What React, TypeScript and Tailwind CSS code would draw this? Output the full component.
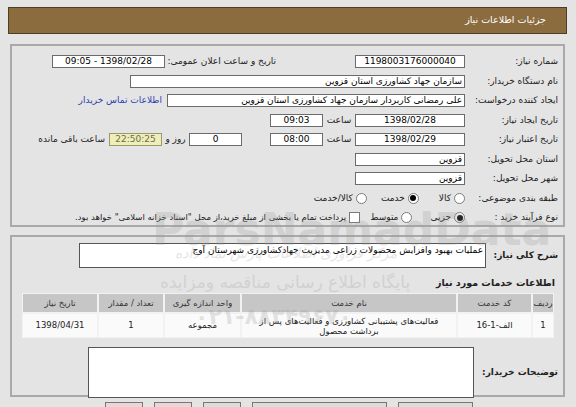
const Box = ({ w, children, align = "center", className = "" }: { w: string; children?: React.ReactNode; align?: "center" | "right"; className?: string }) => (
  <div
    className={`${w} h-[13px] shrink-0 bg-white border border-[#6b6b6b] flex items-center px-[2px] leading-none text-black whitespace-nowrap overflow-hidden ${align === "center" ? "justify-center" : "justify-start"} ${className}`}
  >
    {children}
  </div>
);

const Radio = ({ checked = false }: { checked?: boolean }) => (
  <span className="w-[11px] h-[11px] rounded-full border border-[#7a7a7a] bg-white flex items-center justify-center shrink-0">
    {checked && <span className="w-[6px] h-[6px] rounded-full bg-black" />}
  </span>
);

const Row = ({ label, children }: { label: string; children?: React.ReactNode }) => (
  <div className="h-[19.5px] flex items-center whitespace-nowrap">
    <div className="w-[93px] shrink-0 text-[#222]">{label}</div>
    {children}
  </div>
);

export default function App() {
  return (
    <div
      dir="rtl"
      className="relative w-[576px] h-[407px] overflow-hidden bg-[#e4e4e4] text-[9px] text-[#222]"
      style={{ fontFamily: '"DejaVu Sans", Tahoma, sans-serif' }}
    >
      <div className="pt-[7px] mr-[9px] ml-[8px]">
        <div className="h-[27px] bg-[#8b6c3f] border border-[#4f3e24] flex items-center pr-[20px] text-white text-[9.5px]">
          جزئیات اطلاعات نیاز
        </div>
      </div>

      {/* panel 1 */}
      <div className="mt-[10px] mr-[11px] ml-[10px] h-[183px] border-2 border-[#a9a9a9] pr-[5px] pt-[6px]">
        <Row label="شماره نیاز:">
          <Box w="w-[110px]">1198003176000040</Box>
          <div className="w-[108px] mr-[79px] shrink-0">تاریخ و ساعت اعلان عمومی:</div>
          <Box w="w-[113px]" className="mr-[3px]">1398/02/28 - 09:05</Box>
        </Row>
        <Row label="نام دستگاه خریدار:">
          <Box w="w-[335px]" align="right">سازمان جهاد کشاورزی استان قزوین</Box>
        </Row>
        <Row label="ایجاد کننده درخواست:">
          <Box w="w-[298px]" align="right">علی رمضانی کاربردار سازمان جهاد کشاورزی استان قزوین</Box>
          <span className="mr-[5px] text-[#2f3fb0]">اطلاعات تماس خریدار</span>
        </Row>
        <Row label="تاریخ ایجاد نیاز:">
          <Box w="w-[110px]">1398/02/28</Box>
          <span className="w-[32px] text-center">ساعت</span>
          <Box w="w-[53px]">09:03</Box>
        </Row>
        <Row label="تاریخ اعتبار نیاز:">
          <Box w="w-[110px]">1398/02/29</Box>
          <span className="w-[32px] text-center">ساعت</span>
          <Box w="w-[53px]">08:00</Box>
          <Box w="w-[53px]" className="mr-[28px]">0</Box>
          <span className="w-[27px] text-center">روز و</span>
          <div className="w-[53px] h-[13px] bg-[#eeeebb] border border-[#9a9a6a] flex items-center justify-center text-[#6d6d4a] leading-none">22:50:25</div>
          <span className="mr-[4px]">ساعت باقی مانده</span>
        </Row>
        <Row label="استان محل تحویل:">
          <Box w="w-[110px]" align="right">قزوین</Box>
        </Row>
        <Row label="شهر محل تحویل:">
          <Box w="w-[110px]" align="right">قزوین</Box>
        </Row>
        <Row label="طبقه بندی موضوعی:">
          <div className="flex items-center gap-[3px]">
            <Radio />
            <span>کالا</span>
          </div>
          <div className="flex items-center gap-[3px] mr-[20px]">
            <Radio checked />
            <span>خدمت</span>
          </div>
          <div className="flex items-center gap-[3px] mr-[14px]">
            <Radio />
            <span>کالا/خدمت</span>
          </div>
        </Row>
        <Row label="نوع فرآیند خرید :">
          <div className="flex items-center gap-[3px]">
            <Radio checked />
            <span>جزیی</span>
          </div>
          <div className="flex items-center gap-[3px] mr-[18px]">
            <Radio />
            <span>متوسط</span>
          </div>
          <div className="flex items-center gap-[3px] mr-[10px]">
            <span className="w-[11px] h-[11px] border border-[#7a7a7a] bg-white shrink-0" />
            <span className="text-[8.5px]">پرداخت تمام یا بخشی از مبلغ خرید،از محل "اسناد خزانه اسلامی" خواهد بود.</span>
          </div>
        </Row>
      </div>

      {/* panel 2 */}
      <div className="mt-[8px] mr-[11px] ml-[10px] h-[162px] border-2 border-[#a9a9a9] pt-[6px]">
        <div className="flex items-center pr-[5px]">
          <div className="w-[72px] shrink-0 text-[9px] font-bold text-[#222] whitespace-nowrap">شرح کلی نیاز:</div>
          <div className="w-[407px] h-[25px] bg-white border border-[#555] px-[2px] leading-[13px] text-black whitespace-nowrap overflow-hidden">
            عملیات بهبود وافزایش محصولات زراعی مدیریت جهادکشاورزی شهرستان آوج
          </div>
        </div>
        <div className="mt-[8px] pr-[8px] text-[9.5px] font-bold text-[#222] leading-[14px]">اطلاعات خدمات مورد نیاز</div>
        <div className="mt-[3px] mr-[9px] w-[532px] bg-[#f2f2f2] p-px">
          <div className="grid grid-cols-[20px_73px_214px_75px_64px_1fr] gap-[2px] text-[8.5px]">
            {["ردیف", "کد خدمت", "نام خدمت", "واحد اندازه گیری", "تعداد / مقدار", "تاریخ نیاز"].map((h) => (
              <div key={h} className="h-[18px] bg-[#c6c6c6] flex items-center justify-center text-[#333] whitespace-nowrap overflow-hidden">
                {h}
              </div>
            ))}
            <div className="h-[23px] bg-[#fafafa] flex items-center justify-center">1</div>
            <div className="h-[23px] bg-[#fafafa] flex items-center justify-center">الف-1-16</div>
            <div className="h-[23px] bg-[#fafafa] flex items-center justify-center text-center leading-[10px] px-[2px]">
              فعالیت‌های پشتیبانی کشاورزی و فعالیت‌های پس از برداشت محصول
            </div>
            <div className="h-[23px] bg-[#fafafa] flex items-center justify-center">مجموعه</div>
            <div className="h-[23px] bg-[#fafafa] flex items-center justify-center">1</div>
            <div className="h-[23px] bg-[#fafafa] flex items-center justify-center">1398/04/31</div>
          </div>
        </div>
        <div className="flex items-center mt-[9px] pr-[5px]">
          <div className="w-[84px] shrink-0 text-[9px] font-bold text-[#222] whitespace-nowrap">توضیحات خریدار:</div>
          <div className="w-[386px] h-[51px] bg-white border border-[#555]" />
        </div>
      </div>

      {/* buttons */}
      <div className="mt-[5px] flex gap-[11px] pr-[103px]">
        <div className="w-[75px] h-[10px] bg-[#dcdcdc] border border-[#777]" />
        <div className="w-[135px] h-[10px] bg-[#dcdcdc] border border-[#777]" />
        <div className="w-[38px] h-[10px] bg-[#dcdcdc] border border-[#777]" />
        <div className="w-[38px] h-[10px] bg-[#ead6d6] border border-[#777]" />
        <div className="w-[38px] h-[10px] bg-[#ead6d6] border border-[#777]" />
      </div>

      {/* watermark */}
      <div className="pointer-events-none absolute left-[152px] top-[208px] text-[44px] font-bold text-[#9a9a9a] opacity-25 leading-none" dir="ltr">
        ParsNamadData
      </div>
      <div className="pointer-events-none absolute left-[175px] top-[246px] text-[14px] italic text-[#9a9a9a] opacity-25 leading-none">
        مرکز فراوری اطلاعات پارس نماد داده
      </div>
      <div className="pointer-events-none absolute left-[160px] top-[274px] text-[17px] text-[#9a9a9a] opacity-25 leading-none">
        پایگاه اطلاع رسانی مناقصه ومزایده
      </div>
      <div className="pointer-events-none absolute left-[195px] top-[306px] text-[22px] font-bold text-[#9a9a9a] opacity-25 leading-none" dir="ltr">
        ۰۲۱-۸۸۳۴۹۶۷۰
      </div>
    </div>
  );
}
